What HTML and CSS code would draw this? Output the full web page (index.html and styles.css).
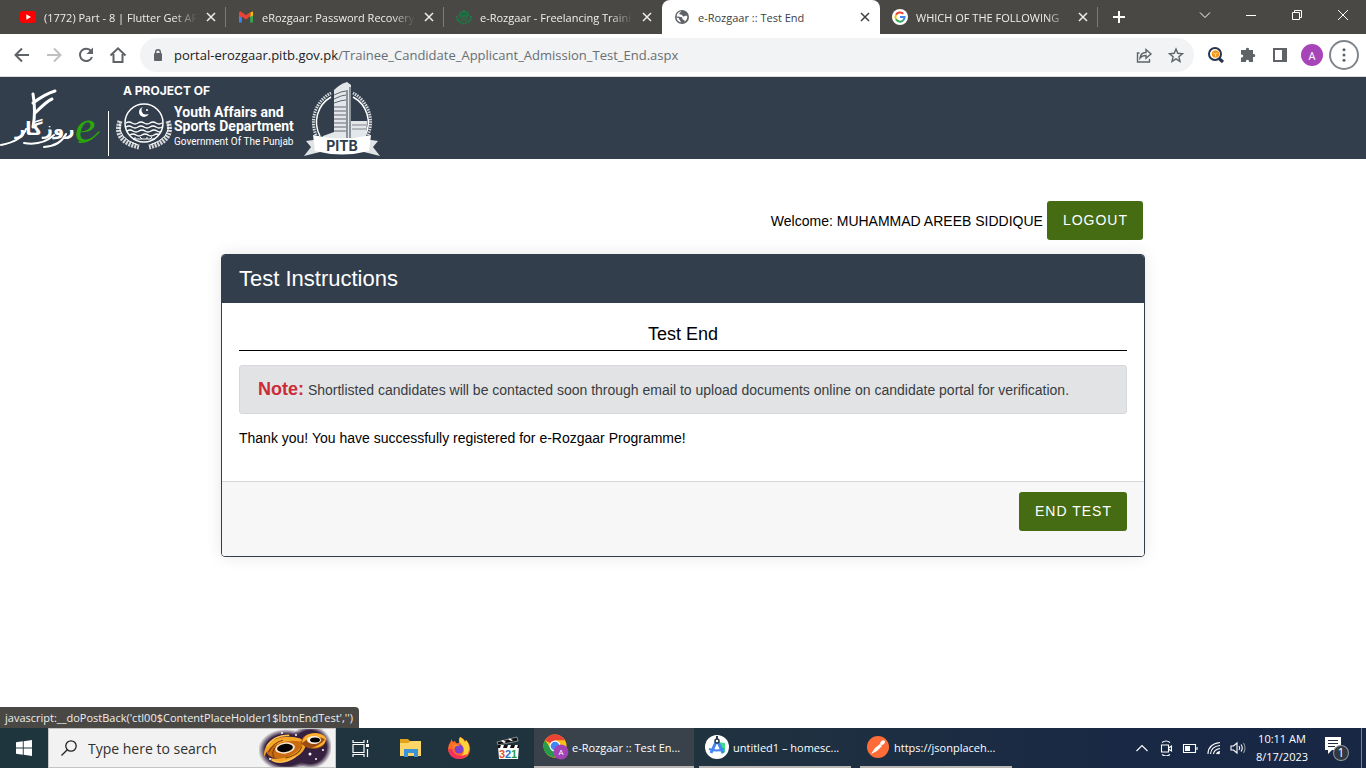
FILE: index.html
```html
<!DOCTYPE html>
<html lang="en">
<head>
<meta charset="utf-8">
<title>e-Rozgaar :: Test End</title>
<link rel="stylesheet" href="styles.css">
</head>
<body>
<div class="desktop">
  <header class="tabstrip">
    <div class="tabs">
      <div class="tab">
        <svg class="favicon" viewBox="0 0 16 16"><rect y="2" width="16" height="12" rx="3" fill="#f00"/><path d="M6.3 5.2v5.6L11 8z" fill="#fff"/></svg>
        <span class="tab-title">(1772) Part - 8 | Flutter Get AP</span>
        <button class="tab-close" aria-label="Close tab"><svg viewBox="0 0 10 10"><path d="M1 1l8 8M9 1L1 9"/></svg></button>
      </div>
      <div class="tab">
        <svg class="favicon" viewBox="0 0 16 16"><path d="M1 4.500v9h2.800V6z" fill="#4285f4"/><path d="M15 4.500v9h-2.800V6z" fill="#34a853"/><path d="M12.200 3.500L15 2.500v4L12.200 8z" fill="#fbbc04"/><path d="M1 6.500V3.800C1 2.400 2.500 2 3.600 2.900L8 6.200l4.400-3.300V7L8 10.600 3.800 7.400V9z" fill="#ea4335"/></svg>
        <span class="tab-title">eRozgaar: Password Recovery</span>
        <button class="tab-close" aria-label="Close tab"><svg viewBox="0 0 10 10"><path d="M1 1l8 8M9 1L1 9"/></svg></button>
      </div>
      <div class="tab">
        <svg class="favicon" viewBox="0 0 16 16" fill="none" stroke="#1d7a46"><path d="M3 7a5 4.500 0 0 1 10 0z" fill="#1d6a40"/><path d="M4 3.500l1-1M7 1.500h2M11 2.500l1 1" /><path d="M1 7v3l2 3M15 7v3l-2 3M2 10l2 3 4 2 4-2 2-3" stroke-width="2" stroke-dasharray="2 1"/><path d="M4 9h8M5 11h6"/></svg>
        <span class="tab-title">e-Rozgaar - Freelancing Traini</span>
        <button class="tab-close" aria-label="Close tab"><svg viewBox="0 0 10 10"><path d="M1 1l8 8M9 1L1 9"/></svg></button>
      </div>
      <div class="tab active">
        <svg class="favicon" viewBox="0 0 16 16"><circle cx="8" cy="8" r="7" fill="#5f6368"/><path d="M7.300 2.300c-.5 1.200-1.800 1.100-2 2.300-.1 1 1 1 2.200 1.100 1 .2.800 1.500 1.900 1.700 1.300.2 1.700-.9 3.800-.5.500 2.500-.9 4.600-2.700 5.600.2-1.500-.7-1.700-1.700-2-.9-.4.100-1.600-1-2.200C6.200 7.400 4 8 2.600 7.200 2.700 4.600 4.700 2.700 7.300 2.300zM2.500 8.600c1.500.4 2.700.5 2.700 1.600 0 1 1.700 1 1.600 3.200-2.300-.5-4-2.300-4.300-4.800z" fill="#fff"/></svg>
        <span class="tab-title">e-Rozgaar :: Test End</span>
        <button class="tab-close" aria-label="Close tab"><svg viewBox="0 0 10 10"><path d="M1 1l8 8M9 1L1 9"/></svg></button>
      </div>
      <div class="tab">
        <svg class="favicon" viewBox="0 0 16 16" fill="none" stroke-width="2"><circle cx="8" cy="8" r="8" fill="#fff"/><path d="M4 5.700A4.600 4.600 0 0 1 11.300 4.800" stroke="#ea4335"/><path d="M4 5.700a4.600 4.600 0 0 0 0 4.600" stroke="#fbbc05"/><path d="M4 10.300a4.600 4.600 0 0 0 7 1.200" stroke="#34a853"/><path d="M11 11.500A4.600 4.600 0 0 0 12.600 8H8" stroke="#4285f4"/></svg>
        <span class="tab-title">WHICH OF THE FOLLOWING</span>
        <button class="tab-close" aria-label="Close tab"><svg viewBox="0 0 10 10"><path d="M1 1l8 8M9 1L1 9"/></svg></button>
      </div>
      <button class="new-tab" aria-label="New tab"><svg viewBox="0 0 12 12"><path d="M6 0v12M0 6h12"/></svg></button>
    </div>
    <div class="window-controls">
      <button aria-label="Search tabs"><svg viewBox="0 0 12 12"><path d="M1 3.500l5 5 5-5"/></svg></button>
      <button aria-label="Minimize"><svg viewBox="0 0 12 12"><path d="M1 6.500h10"/></svg></button>
      <button aria-label="Restore"><svg viewBox="0 0 12 12"><path d="M1.500 3.500h7v7h-7zM3.500 3.500v-2h7v7h-2"/></svg></button>
      <button aria-label="Close"><svg viewBox="0 0 12 12"><path d="M1 1l10 10M11 1L1 11"/></svg></button>
    </div>
  </header>

  <nav class="toolbar" aria-label="Browser toolbar">
    <button class="tool" aria-label="Back"><svg viewBox="0 0 20 20"><path d="M17 10H4M10 3.500L3.500 10l6.500 6.500" class="thick"/></svg></button>
    <button class="tool faint" aria-label="Forward"><svg viewBox="0 0 20 20"><path d="M3 10h13M10 3.500l6.500 6.500-6.500 6.500" class="thick"/></svg></button>
    <button class="tool" aria-label="Reload"><svg viewBox="0 0 20 20"><path d="M15.200 6.200a6.200 6.200 0 1 0 .8 5.800" class="thick"/><path d="M17 2.500V9h-6.500z" fill="#5f6368" stroke="none"/></svg></button>
    <button class="tool" aria-label="Home"><svg viewBox="0 0 20 20"><path d="M5.500 9v8h9V9M2.500 10.500L10 3.300l7.500 7.200" class="thick"/></svg></button>
    <div class="omnibox">
      <svg class="lock" viewBox="0 0 12 14"><rect x="2" y="5" width="8" height="8" rx="1" fill="#5f6368"/><path d="M3.700 5.500V4a2.300 2.300 0 0 1 4.600 0v1.500" fill="none" stroke="#5f6368" stroke-width="1.400"/></svg>
      <span class="url"><b>portal-erozgaar.pitb.gov.pk</b>/Trainee_Candidate_Applicant_Admission_Test_End.aspx</span>
      <button class="tool" aria-label="Share"><svg viewBox="0 0 20 20"><path d="M5.500 8H3.500v9h12v-3M6 13c.5-4 3-5.500 6-5.500V4.500l5 4.500-5 4.200v-2.700c-3 0-4.500.6-6 2.500z"/></svg></button>
      <button class="tool" aria-label="Bookmark"><svg viewBox="0 0 20 20"><path d="M10 4l1.800 4.300 4.700.4-3.600 3.100 1.100 4.600-4-2.500-4 2.500 1.100-4.600-3.600-3.100 4.700-.4z"/></svg></button>
    </div>
    <button class="tool" aria-label="Search extension"><svg viewBox="0 0 20 20"><circle cx="9" cy="9" r="6" fill="#fff" stroke="#26344d" stroke-width="2"/><circle cx="9.500" cy="9" r="3.800" fill="#f59a1c" stroke="none"/><path d="M7.500 8l2 1 2-1M9.500 9v2.500" stroke="#fcd79b" stroke-width="1"/><path d="M13 13.500l4 3.500" stroke="#26344d" stroke-width="3"/></svg></button>
    <button class="tool" aria-label="Extensions"><svg viewBox="0 0 20 20"><path d="M4 5h4c-.8-3 3.800-3 3 0h4v4c3-.8 3 3.800 0 3v5h-4c.5-3-3.500-3-3 0H3v-4.500c3 .5 3-3.500 0-3V5z" fill="#5f6368" stroke="none"/></svg></button>
    <button class="tool" aria-label="Side panel"><svg viewBox="0 0 20 20"><path d="M4 4h12v12H4z" stroke-width="2"/><path d="M12 3h5v14h-5z" fill="#5f6368" stroke="none"/></svg></button>
    <button class="avatar" aria-label="Profile">A</button>
    <button class="more" aria-label="Menu"><svg viewBox="0 0 20 20"><g fill="#5f6368"><circle cx="10" cy="3.500" r="1.900"/><circle cx="10" cy="10" r="1.900"/><circle cx="10" cy="16.500" r="1.900"/></g></svg></button>
  </nav>

  <main class="page">
    <div class="site-header">
      <svg class="brand-mark" viewBox="0 0 104 82" fill="none" stroke-linecap="round">
        <path d="M33 17Q36 34 33 50M33 26Q45 17 55 14M35 36Q47 24 52 22" stroke="#fff" stroke-width="3"/>
        <path d="M26 52Q22 64 1 68M54 58Q42 69 24 66M66 57Q60 69 44 70" stroke="#fff" stroke-width="2"/>
        <text x="15" y="58" class="brand-urdu">روزگار</text>
        <text x="75" y="65" class="brand-e">e</text>
        <path d="M79 65Q88 67 99 55" stroke="#2aa80b" stroke-width="1.500"/>
      </svg>
      <div class="department">
        <p class="project-of">A PROJECT OF</p>
        <div class="department-row">
          <svg class="emblem" viewBox="0 0 56 48" fill="none" stroke="#fff">
            <path d="M4 19Q-3 39 23 45M52 19Q59 39 33 45" stroke-width="5" stroke-dasharray="2 1" opacity=".8"/>
            <path d="M4 21Q1 36 22 43M52 21q3 15-18 22" stroke-width="1"/>
            <circle cx="28" cy="21" r="19" fill="#323e4c" stroke-width="1.500"/>
            <circle cx="28" cy="10" r="5" fill="#fff" stroke="none"/><circle cx="30" cy="8" r="4.500" fill="#323e4c" stroke="none"/><circle cx="31" cy="8" r="1" fill="#fff" stroke="none"/>
            <path d="M10 21q3-2 6 0t6 0 6 0 6 0 6 0 6 0M10 25q3-2 6 0t6 0 6 0 6 0 6 0 6 0M11 29q3-2 6 0t6 0 6 0 6 0 6 0 4 0M14 33q3-2 6 0t6 0 6 0 6 0 5 0" stroke-width="1.500"/>
            <path d="M17 37h22M19 35v2M24 35l2 2M31 35v2M36 35l-2 2"/>
          </svg>
          <div class="department-name">
            <strong>Youth Affairs and</strong>
            <strong>Sports Department</strong>
            <span>Government Of The Punjab</span>
          </div>
        </div>
      </div>
      <svg class="pitb" viewBox="0 0 78 78">
        <path d="M17 56A29 29 0 0 1 28 17M62 56A29 29 0 0 0 50 17" fill="none" stroke="#fff" stroke-width="1.500"/>
        <path d="M13 55A33 33 0 0 1 28 13M65 55A33 33 0 0 0 50 13" fill="none" stroke="#d7dbdf" stroke-width="3" stroke-dasharray="1.500 1"/>
        <path d="M31 60V10q6-6 13-8l4 3v56z" fill="#e4e7e9"/>
        <path d="M31 15q8-4 12-4M31 19q8-4 12-4M31 23q8-3 12-3M31 27h12M31 31h12M31 35h12M31 39h12M31 43h12M31 47h12M31 51h12" fill="none" stroke="#5e6770"/>
        <path d="M44 10v48M47 7v51" stroke="#323e4c"/>
        <path d="M48 41h16l-1 17H48zM20 56l11-4v8H20z" fill="#e4e7e9"/>
        <path d="M49 45h14M49 49h14" stroke="#7d858c"/>
        <path d="M1 76l7-9-5-6 14-2v13zM77 76l-7-9 5-6-14-2v13z" fill="#e1e4e6"/>
        <path d="M10 55q29 7 58 0l-2 16q-27 7-54 0z" fill="#fff"/>
        <text x="39" y="71" text-anchor="middle" class="pitb-name">PITB</text>
      </svg>
    </div>

    <div class="container">
      <div class="welcome">
        <span>Welcome: MUHAMMAD AREEB SIDDIQUE</span>
        <button class="btn">LOGOUT</button>
      </div>
      <section class="card">
        <h1 class="card-header">Test Instructions</h1>
        <div class="card-body">
          <h2 class="subtitle">Test End</h2>
          <p class="note"><strong>Note:</strong> Shortlisted candidates will be contacted soon through email to upload documents online on candidate portal for verification.</p>
          <p class="thanks">Thank you! You have successfully registered for e-Rozgaar Programme!</p>
        </div>
        <div class="card-footer"><button class="btn">END TEST</button></div>
      </section>
    </div>
    <div class="status">javascript:__doPostBack('ctl00$ContentPlaceHolder1$lbtnEndTest','')</div>
  </main>

  <footer class="taskbar">
    <button class="start" aria-label="Start"><svg viewBox="0 0 16 16" fill="#fff"><path d="M0 2.300L6.800 1.300v6.300H0zM7.700 1.200L16 0v7.600H7.700zM0 8.400h6.800v6.300L0 13.700zM7.700 8.400H16V16l-8.300-1.200z"/></svg></button>
    <div class="search">
      <svg class="search-icon" viewBox="0 0 16 16" fill="none" stroke="#222" stroke-width="1.300"><circle cx="10" cy="6" r="5.200"/><path d="M6.300 9.700L.5 15.500"/></svg>
      <input type="text" aria-label="Search" placeholder="Type here to search">
      <svg class="galaxy" viewBox="0 0 72 38">
        <defs><radialGradient id="haze"><stop offset="0.750" stop-color="#35203f"/><stop offset="1" stop-color="#35203f" stop-opacity="0"/></radialGradient></defs>
        <ellipse cx="27" cy="21" rx="28" ry="21" fill="url(#haze)"/><ellipse cx="51" cy="18" rx="22" ry="22" fill="url(#haze)"/>
        <g transform="rotate(-8 26 19)"><ellipse cx="26" cy="19" rx="19" ry="11" fill="#c96c12"/><path d="M4 25Q5 9 25 8q17 0 23 9-12-6-24-4Q9 15 4 25zM48 12q1 15-20 20-14 1-20-6 12 5 23 1 12-4 17-15z" fill="#f6a728"/><path d="M8 15Q16 5 32 7M11 29q10 7 24 0" fill="none" stroke="#ffc34d" stroke-width="1.500"/><path d="M9 21q6-9 16-10M43 20q-4 8-18 9M14 27q-3-6 4-11" fill="none" stroke="#7a3a10"/><ellipse cx="26" cy="19" rx="10" ry="5.500" fill="#fbe3c6"/><ellipse cx="26" cy="19" rx="8" ry="4" fill="#050304"/></g>
        <path d="M42 14q0-8 12-10 11 0 13 6 0 8-11 10-9 0-14-6z" fill="#9a4c12"/><path d="M43 14q1-10 14-10 9 1 11 7-9-5-16-2-6 2-9 5zM67 9q0 10-15 10 9-2 15-10z" fill="#ffb030"/><ellipse cx="55" cy="11" rx="7" ry="4" fill="#fff0df"/><ellipse cx="56" cy="11" rx="5" ry="2.500" fill="#000"/>
        <g fill="#fff"><circle cx="23" cy="4" r="1"/><circle cx="37" cy="6" r="1"/><circle cx="51" cy="25" r="1.500"/><circle cx="11" cy="30" r="1"/><circle cx="64" cy="21" r="1"/><circle cx="57" cy="30" r="1"/></g>
      </svg>
    </div>
    <button class="launcher" aria-label="Task view"><svg viewBox="0 0 24 24" fill="none" stroke="#fff" stroke-width="1.200"><path d="M4 8.500h11v8H4zM4 4v2.500h11V4M4 21v-2.500h11V21M18.500 4v3M18.500 13v8"/><path d="M17 8h3v3h-3z" fill="#fff" stroke="none"/></svg></button>
    <button class="launcher" aria-label="File Explorer"><svg viewBox="0 0 24 24"><path d="M2 3h8l2 2h11v15H2z" fill="#e2a21c"/><path d="M2 7h8l3-2h10v15H2z" fill="#fed667"/><path d="M6 21v-8h14v8h-4v-4h-6v4z" fill="#3b94d9"/></svg></button>
    <button class="launcher" aria-label="Firefox"><svg viewBox="0 0 24 24"><path d="M13 1q5 2 5 5l1-2q5 5 4 11-2 8-11 8Q2 22 1 13q0-4 3-8V3l2 3 2-1 1 2q3 1 3-1-1-3 1-5z" fill="#ff6b24"/><path d="M13 1q-2 4 1 7t3 7q-1 6-8 7 11 1 13-8 1-5-3-10l-1 2Q17 3 13 1z" fill="#ffd43a"/><path d="M1 13q1 9 10 10 7 0 9-5-5 3-10 1-4-2-5-6z" fill="#f5315c"/><circle cx="12" cy="13" r="4.500" fill="#8141cf"/><path d="M6 9q5-2 7 1-5-1-6 3z" fill="#ff8b25"/></svg></button>
    <button class="launcher" aria-label="Media Player Classic"><svg viewBox="0 0 24 24"><path d="M1 6l20-5 1 4L2 9z" fill="#111" stroke="#eee" stroke-width=".5"/><path d="M5 5l3 2 2-1-3-2zM12 3l3 2 2-.5-3-2z" fill="#fff"/><path d="M2 10h21l-1 13H3z" fill="#fff"/><path d="M2 9h21v3H2z" fill="#111"/><path d="M5 9l-1 3h3l1-3zM12 9l-1 3h3l1-3zM19 9l-1 3h3l1-3z" fill="#fff"/><text x="3" y="22" class="media-number" fill="#e0542b">3</text><text x="9" y="22" class="media-number" fill="#2477be">2</text><text x="15" y="22" class="media-number" fill="#279c43">1</text></svg></button>
    <button class="app current"><svg viewBox="0 0 26 26"><circle cx="12" cy="12" r="11.500" fill="#fbc116"/><path d="M12 12L2 6.200A11.500 11.500 0 0 1 22 6.200H12z" fill="#ea4335"/><path d="M2 6.200A11.500 11.500 0 0 0 11 23.500L16 15l-8 0z" fill="#269b4c"/><circle cx="12" cy="12" r="5.500" fill="#fff"/><circle cx="12" cy="12" r="4.300" fill="#4285f4"/><circle cx="18" cy="18" r="7.500" fill="#a142b5"/><text x="18" y="21" text-anchor="middle" class="badge-letter">A</text></svg><span>e-Rozgaar :: Test En...</span></button>
    <button class="app"><svg viewBox="0 0 26 26"><circle cx="13" cy="13" r="12" fill="#fff"/><path d="M14 8l7 1v9l-3 2z" fill="#3ddc84"/><path d="M12 8L7 19M14 8l5 11" stroke="#4285f4" stroke-width="3"/><path d="M5 15q8 3 15 0" fill="none" stroke="#4285f4" stroke-width="2"/><circle cx="13" cy="7" r="2" fill="#fff" stroke="#263746" stroke-width="1.500"/><path d="M13 2v3" stroke="#263746" stroke-width="2"/></svg><span>untitled1 – homesc...</span></button>
    <button class="app"><svg viewBox="0 0 26 26"><circle cx="13" cy="13" r="11" fill="#ff6c37"/><path d="M6 20l4-6 5-4 2 2-5 5zM15 9q2-4 5-2 0 4-4 4z" fill="#fff"/></svg><span>https://jsonplaceh...</span></button>
    <div class="tray">
      <button aria-label="Show hidden icons"><svg viewBox="0 0 16 16"><path d="M2.500 11L8 5.500l5.500 5.500"/></svg></button>
      <button aria-label="Meet now"><svg viewBox="0 0 16 16"><path d="M3.500 5h7v7h-7zM10.500 8l3-2v5l-3-2M4 2.500q4-3 8 0M4 14.500q4 3 8 0"/></svg></button>
      <button aria-label="Battery"><svg viewBox="0 0 16 16"><path d="M1.500 4.500h12v8h-12zM15 7v3"/><path d="M3 6h5v5H3z" fill="#fff" stroke="none"/></svg></button>
      <button aria-label="Network"><svg viewBox="0 0 16 16"><path d="M2 14Q2 4 14 2.500M4.500 14Q5 6.500 14 5.500M7.500 14Q8 9.500 14 8.500M10.500 14q.5-2 3.500-2.500"/><circle cx="12.500" cy="13" r="1.300" fill="#fff" stroke="none"/></svg></button>
      <button aria-label="Volume"><svg viewBox="0 0 16 16"><path d="M1 6h2.500L7 3v10l-3.500-3H1zM9 6q1.500 2 0 4M11 4.500q2.500 3.500 0 7"/><path d="M13.500 3q3 5 0 10" opacity=".5"/></svg></button>
      <div class="clock"><time>10:11 AM</time><time>8/17/2023</time></div>
      <button class="notify" aria-label="Notifications"><svg viewBox="0 0 26 26"><path d="M1 2h16v13H8l-4 4v-4H1z" fill="#fff" stroke="none"/><path d="M4 5.500h10M4 8.500h10M4 11.500h7" stroke="#1e2d41"/><circle cx="17" cy="18" r="7.500" fill="#303840" stroke="#8d9399"/><text x="17" y="22" text-anchor="middle" class="notify-count">1</text></svg></button>
    </div>
  </footer>
</div>
</body>
</html>
```
FILE: styles.css
```css
* { box-sizing: border-box; }
body { margin: 0; font-family: "Open Sans", "Noto Sans", sans-serif; }
button { margin: 0; padding: 0; border: 0; background: none; color: inherit; font: inherit; }
p, h1, h2 { margin: 0; font-weight: 400; }
svg { display: block; flex: none; }
.desktop { display: flex; flex-direction: column; height: 100vh; overflow: hidden; background: #fff; }

.tabstrip { display: flex; flex: none; justify-content: space-between; height: 34px; background: #4a4845; color: #eee; }
.tabs { display: flex; flex: 1; min-width: 0; padding-left: 8px; }
.tab { display: flex; align-items: center; flex: 0 1 218px; min-width: 0; padding: 0 9px 0 12px; gap: 8px; position: relative; font-size: 11px; }
.tab::after { content: ""; position: absolute; right: 0; top: 7px; height: 20px; width: 1px; background: #7d7b78; }
.tab:nth-child(3)::after, .tab.active::after { display: none; }
.tab.active { background: #fff; color: #3c4043; border-radius: 8px 8px 0 0; }
.favicon { width: 16px; height: 16px; }
.tab-title { flex: 1; overflow: hidden; white-space: nowrap; mask-image: linear-gradient(to right, #000 85%, transparent); }
.active .tab-title { mask-image: none; }
.tab-close { width: 12px; display: flex; justify-content: center; }
.tab-close svg { width: 10px; height: 10px; stroke: currentColor; stroke-width: 1.5; }
.new-tab { width: 42px; display: flex; align-items: center; justify-content: center; }
.new-tab svg { width: 12px; stroke: #fff; stroke-width: 2; }
.window-controls { display: flex; height: 29px; }
.window-controls button { width: 46px; display: flex; align-items: center; justify-content: center; }
.window-controls svg { width: 12px; fill: none; stroke: #fff; }

.toolbar { display: flex; align-items: center; flex: none; height: 43px; padding: 0 6px; border-bottom: 1px solid #d8dcdc; }
.tool { width: 32px; height: 32px; display: flex; align-items: center; justify-content: center; flex: none; }
.tool svg { width: 20px; height: 20px; fill: none; stroke: #5f6368; stroke-width: 1.4; }
.tool .thick { stroke-width: 2; }
.faint { opacity: .4; }
.omnibox { display: flex; align-items: center; flex: 1; min-width: 0; height: 34px; margin: 0 6px; padding: 0 2px 0 12px; border-radius: 17px; background: #f1f3f4; }
.lock { width: 12px; height: 14px; margin-right: 10px; }
.url { flex: 1; overflow: hidden; white-space: nowrap; font-size: 13px; color: #6a6e73; }
.url b { font-weight: 400; color: #202124; }
.avatar { width: 22px; height: 22px; margin: 0 5px; border-radius: 50%; background: #a745b8; color: #fff; font-size: 11px; }
.more { width: 30px; height: 30px; margin: 0 1px; display: flex; align-items: center; justify-content: center; border: 2px solid #80868b; border-radius: 50%; }
.more svg { width: 16px; }

.page { position: relative; flex: 1; min-height: 0; overflow: hidden; font-family: "Liberation Sans", Arial, sans-serif; font-size: 14px; line-height: 20px; color: #000; }
.site-header { display: flex; height: 82px; background: #323e4c; color: #fff; }
.brand-mark { width: 104px; height: 82px; }
.brand-urdu { font: bold 18px "DejaVu Sans", sans-serif; fill: #fff; }
.brand-e { font: italic 46px "Liberation Serif", serif; fill: #2aa80b; }
.department { display: flex; flex-direction: column; position: relative; padding: 7px 9px 0 12px; }
.department::before { content: ""; position: absolute; left: 4px; top: 34px; height: 45px; width: 1px; background: #fff; }
.project-of { padding-left: 7px; font: 700 12px/14px Inter, sans-serif; }
.department-row { display: flex; gap: 2px; padding-top: 4px; }
.emblem { width: 56px; height: 48px; }
.department-name { display: flex; flex-direction: column; padding-top: 3px; font-family: Roboto, sans-serif; font-size: 14px; line-height: 14px; white-space: nowrap; }
.department-name span { font-size: 10px; line-height: 18px; }
.pitb { width: 78px; height: 78px; margin-top: 3px; }
.pitb-name { font: 700 14px Inter, sans-serif; fill: #323e4c; }

.container { max-width: 924px; margin: 0 auto; padding-top: 42px; }
.welcome { display: flex; align-items: center; justify-content: flex-end; gap: 4px; padding-right: 2px; margin-bottom: 14px; }
.btn { height: 39px; padding: 0 15px 1px 16px; border-radius: 3px; background: #456c13; color: #fff; font-size: 14px; letter-spacing: 1px; }
.card { border: 1px solid #323e4c; border-radius: 4px; overflow: hidden; box-shadow: 0 0 16px rgba(0, 0, 0, .1); }
.card-header { padding: 10px 17px; background: #323e4c; color: #fff; font-size: 22px; line-height: 28px; }
.card-body { padding: 17px 17px 33px; }
.subtitle { padding-bottom: 2px; border-bottom: 1px solid #000; text-align: center; font-size: 18px; line-height: 28px; }
.note { margin: 14px 0; padding: 13px 18px 11px; border: 1px solid #d6d8db; border-radius: 3px; background: #e2e3e5; color: #383d41; line-height: 23px; }
.note strong { color: #cb2c37; font-size: 18px; line-height: 18px; }
.card-footer { display: flex; justify-content: flex-end; padding: 10px 17px 25px; border-top: 1px solid #d6d6d6; background: #f7f7f7; }
.status { position: absolute; left: 0; bottom: 0; height: 21px; padding: 0 6px 0 5px; border-radius: 0 4px 0 0; background: #4a4845; color: #eee; font: 11px/21px "Open Sans", "Noto Sans", sans-serif; white-space: nowrap; }

.taskbar { display: flex; flex: none; height: 40px; background: linear-gradient(90deg, #1e353e, #20333f 50%, #192944 80%, #182744); color: #fff; font-size: 11px; }
.start { width: 48px; display: flex; align-items: center; justify-content: center; }
.start svg { width: 16px; }
.search { display: flex; align-items: center; width: 288px; padding: 0 4px 0 12px; border: 1px solid #c4c4c4; background: #f2f2f2; }
.search-icon { width: 16px; }
.search input { flex: 1; min-width: 0; margin-left: 11px; padding: 0; border: 0; outline: 0; background: none; font: 14px "Open Sans", "Noto Sans", sans-serif; }
.search input::placeholder { color: #303030; opacity: 1; }
.galaxy { width: 72px; height: 38px; }
.launcher { width: 49px; display: flex; align-items: center; justify-content: center; }
.launcher svg { width: 24px; height: 24px; }
.media-number { font: bold 11px "Liberation Sans", sans-serif; }
.app { display: flex; align-items: center; width: 152px; margin-right: 9px; padding: 0 5px; gap: 3px; border-bottom: 2px solid #b9b6b3; white-space: nowrap; overflow: hidden; }
.app.current { width: 160px; margin: 0 5px 0 2px; padding-left: 9px; background: #39424a; }
.app svg { width: 26px; height: 26px; }
.badge-letter { font: 8px "Open Sans", sans-serif; fill: #fff; }
.tray { display: flex; align-items: center; margin-left: auto; padding-right: 1px; border-right: 1px solid #7a8290; margin-right: 4px; }
.tray button { width: 24px; display: flex; align-items: center; justify-content: center; }
.tray svg { width: 16px; fill: none; stroke: #fff; stroke-width: 1.1; }
.clock { display: flex; flex-direction: column; align-items: center; width: 64px; line-height: 18px; }
.tray .notify { width: 46px; }
.tray .notify svg { width: 26px; }
.notify-count { font: 12px "Open Sans", sans-serif; fill: #fff; stroke: none; }
```
